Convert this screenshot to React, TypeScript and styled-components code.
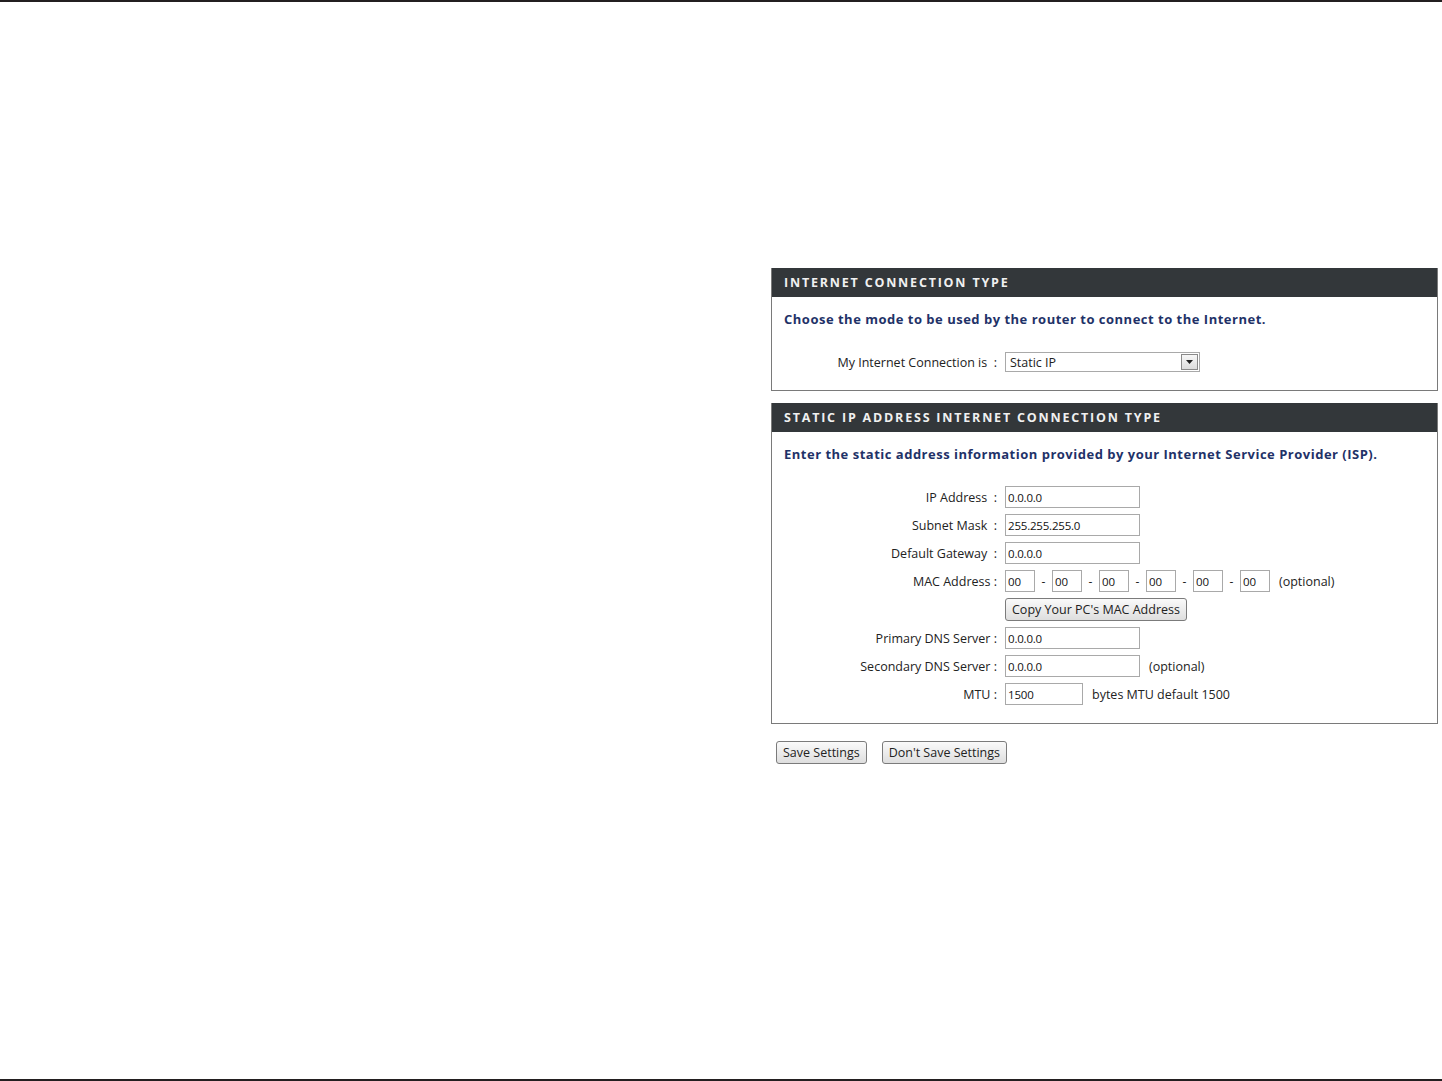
import React from "react";
import styled, { createGlobalStyle } from "styled-components";

const GlobalStyle = createGlobalStyle`
  html, body {
    margin: 0;
    padding: 0;
    background: #ffffff;
  }
  body {
    font-family: "Open Sans", "Liberation Sans", sans-serif;
    color: #222;
  }
`;

const Page = styled.div`
  width: 1442px;
  height: 1081px;
  box-sizing: border-box;
  border-top: 2px solid #231f20;
  border-bottom: 2px solid #231f20;
  padding: 266px 4px 0 771px;
`;

const Column = styled.div`
  width: 667px;
  display: flex;
  flex-direction: column;
`;

const Section = styled.section`
  border: 1px solid #7a7a7a;
  border-top: none;
  margin-bottom: 12px;
`;

const SectionHeader = styled.h2`
  margin: 0;
  height: 29px;
  background: #33373a;
  color: #f0f0f0;
  font-size: 12.5px;
  font-weight: 700;
  letter-spacing: 1.8px;
  text-transform: uppercase;
  display: flex;
  align-items: center;
  padding-left: 12px;
`;

const SectionBody = styled.div<{ $top: number; $bottom: number }>`
  padding: ${(p) => p.$top}px 12px ${(p) => p.$bottom}px 12px;
`;

const Intro = styled.p`
  margin: 0 0 14px 0;
  color: #1f3268;
  font-size: 13px;
  letter-spacing: 0.5px;
  font-weight: 700;
`;

const FormGrid = styled.div<{ $top: number }>`
  display: grid;
  grid-template-columns: 213px 1fr;
  row-gap: 6px;
  column-gap: 8px;
  align-items: center;
  padding-top: ${(p) => p.$top}px;
`;

const Label = styled.label`
  text-align: right;
  font-size: 12.5px;
  color: #222;
  white-space: pre;
`;

const Field = styled.div`
  display: flex;
  align-items: center;
  gap: 8px;
  font-size: 12.5px;
  color: #222;
  min-height: 22px;
`;

const TextInput = styled.input<{ $w: number }>`
  width: ${(p) => p.$w}px;
  height: 22px;
  box-sizing: border-box;
  border: 1px solid #a9a9a9;
  padding: 1px 2px;
  font-family: "Open Sans", "Liberation Sans", sans-serif;
  font-size: 11.5px;
  letter-spacing: -0.2px;
  color: #111;
  background: #fff;
  margin: 0;
`;

const MacGroup = styled.div`
  display: flex;
  align-items: center;
  gap: 5px;
`;

const Dash = styled.span`
  font-size: 12px;
  width: 7px;
  text-align: center;
`;

const Note = styled.span`
  margin-left: 1px;
`;

const SelectBox = styled.div`
  width: 195px;
  height: 20px;
  box-sizing: border-box;
  border: 1px solid #a9a9a9;
  display: flex;
  align-items: center;
  justify-content: space-between;
  font-size: 12.5px;
  padding-left: 4px;
  background: #fff;
`;

const SelectArrow = styled.span`
  width: 17px;
  height: 16px;
  margin-right: 1px;
  box-sizing: border-box;
  border: 1px solid #8a8a8a;
  background: linear-gradient(#f7f7f7, #dcdcdc);
  display: flex;
  align-items: center;
  justify-content: center;
`;

const Button = styled.button`
  height: 23px;
  padding: 0 6px;
  border: 1px solid #7b7b7b;
  border-radius: 3px;
  background: linear-gradient(#fafafa, #dedede);
  font-family: "Open Sans", "Liberation Sans", sans-serif;
  font-size: 12.5px;
  color: #222;
  cursor: pointer;
  margin: 0;
`;

const Actions = styled.div`
  display: flex;
  gap: 15px;
  padding: 5px 0 0 5px;
`;

const macParts = ["00", "00", "00", "00", "00", "00"];

export default function App() {
  return (
    <>
      <GlobalStyle />
      <Page>
        <Column>
          <Section>
            <SectionHeader>Internet Connection Type</SectionHeader>
            <SectionBody $top={13} $bottom={17}>
              <Intro>Choose the mode to be used by the router to connect to the Internet.</Intro>
              <FormGrid $top={9}>
                <Label>{"My Internet Connection is  :"}</Label>
                <Field>
                  <SelectBox>
                    Static IP
                    <SelectArrow>
                      <svg width="7" height="4" viewBox="0 0 7 4">
                        <path d="M0 0 H7 L3.5 4 Z" fill="#222" />
                      </svg>
                    </SelectArrow>
                  </SelectBox>
                </Field>
              </FormGrid>
            </SectionBody>
          </Section>

          <Section>
            <SectionHeader>Static IP Address Internet Connection Type</SectionHeader>
            <SectionBody $top={13} $bottom={18}>
              <Intro>Enter the static address information provided by your Internet Service Provider (ISP).</Intro>
              <FormGrid $top={9}>
                <Label>{"IP Address  :"}</Label>
                <Field>
                  <TextInput $w={135} defaultValue="0.0.0.0" />
                </Field>
                <Label>{"Subnet Mask  :"}</Label>
                <Field>
                  <TextInput $w={135} defaultValue="255.255.255.0" />
                </Field>
                <Label>{"Default Gateway  :"}</Label>
                <Field>
                  <TextInput $w={135} defaultValue="0.0.0.0" />
                </Field>
                <Label>MAC Address :</Label>
                <Field>
                  <MacGroup>
                    {macParts.map((part, i) => (
                      <React.Fragment key={i}>
                        {i > 0 && <Dash>-</Dash>}
                        <TextInput $w={30} defaultValue={part} />
                      </React.Fragment>
                    ))}
                  </MacGroup>
                  <Note>(optional)</Note>
                </Field>
                <span />
                <Field>
                  <Button>Copy Your PC's MAC Address</Button>
                </Field>
                <Label>Primary DNS Server :</Label>
                <Field>
                  <TextInput $w={135} defaultValue="0.0.0.0" />
                </Field>
                <Label>Secondary DNS Server :</Label>
                <Field>
                  <TextInput $w={135} defaultValue="0.0.0.0" />
                  <Note>(optional)</Note>
                </Field>
                <Label>MTU :</Label>
                <Field>
                  <TextInput $w={78} defaultValue="1500" />
                  <Note>bytes MTU default 1500</Note>
                </Field>
              </FormGrid>
            </SectionBody>
          </Section>

          <Actions>
            <Button>Save Settings</Button>
            <Button>Don't Save Settings</Button>
          </Actions>
        </Column>
      </Page>
    </>
  );
}
